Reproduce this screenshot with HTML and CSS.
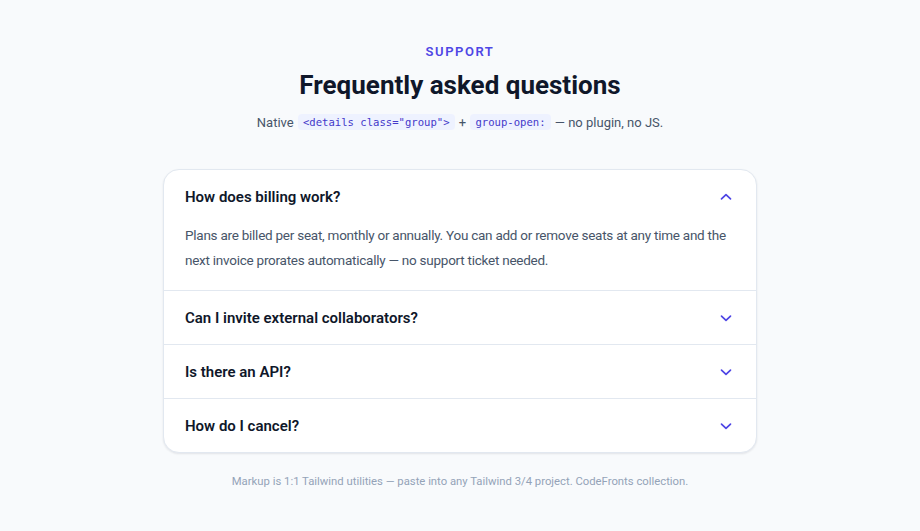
FILE: index.html
```html
<!DOCTYPE html>
<html lang="en">
<head>
<meta charset="utf-8">
<title>FAQ</title>
<link rel="stylesheet" href="styles.css">
</head>
<body>
<main class="page">
  <header class="intro">
    <p class="eyebrow">Support</p>
    <h1 class="title">Frequently asked questions</h1>
    <p class="lead">Native <code class="chip">&lt;details class="group"&gt;</code> + <code class="chip">group-open:</code> — no plugin, no JS.</p>
  </header>

  <section class="card">
    <details class="item" open>
      <summary class="q">
        <span>How does billing work?</span>
        <svg class="chev" viewBox="0 0 16 16" width="16" height="16" aria-hidden="true"><path d="M3.5 6.2L8 10.4l4.5-4.2" fill="none" stroke="currentColor" stroke-width="1.7" stroke-linecap="round" stroke-linejoin="round"/></svg>
      </summary>
      <p class="a">Plans are billed per seat, monthly or annually. You can add or remove seats at any time and the next invoice prorates automatically — no support ticket needed.</p>
    </details>
    <details class="item">
      <summary class="q">
        <span>Can I invite external collaborators?</span>
        <svg class="chev" viewBox="0 0 16 16" width="16" height="16" aria-hidden="true"><path d="M3.5 6.2L8 10.4l4.5-4.2" fill="none" stroke="currentColor" stroke-width="1.7" stroke-linecap="round" stroke-linejoin="round"/></svg>
      </summary>
    </details>
    <details class="item">
      <summary class="q">
        <span>Is there an API?</span>
        <svg class="chev" viewBox="0 0 16 16" width="16" height="16" aria-hidden="true"><path d="M3.5 6.2L8 10.4l4.5-4.2" fill="none" stroke="currentColor" stroke-width="1.7" stroke-linecap="round" stroke-linejoin="round"/></svg>
      </summary>
    </details>
    <details class="item">
      <summary class="q">
        <span>How do I cancel?</span>
        <svg class="chev" viewBox="0 0 16 16" width="16" height="16" aria-hidden="true"><path d="M3.5 6.2L8 10.4l4.5-4.2" fill="none" stroke="currentColor" stroke-width="1.7" stroke-linecap="round" stroke-linejoin="round"/></svg>
      </summary>
    </details>
  </section>

  <p class="foot">Markup is 1:1 Tailwind utilities — paste into any Tailwind 3/4 project. CodeFronts collection.</p>
</main>
</body>
</html>
```

FILE: styles.css
```css
* { box-sizing: border-box; }
html, body { margin: 0; padding: 0; }
body {
  background: #f8fafc;
  font-family: Roboto, Inter, "Liberation Sans", sans-serif;
  color: #0f172a;
  -webkit-font-smoothing: antialiased;
}
.page {
  width: 594px;
  margin: 0 auto;
  padding-top: 42px;
}
.intro { text-align: center; }
.eyebrow {
  margin: 0;
  font-size: 13px;
  line-height: 20px;
  font-weight: 600;
  letter-spacing: 0.12em;
  text-transform: uppercase;
  color: #4f46e5;
}
.title {
  margin: 5px 0 0;
  font-size: 26px;
  line-height: 36px;
  font-weight: 700;
  color: #0f172a;
}
.lead {
  margin: 8px 0 0;
  font-size: 13px;
  line-height: 24px;
  color: #475569;
}
.chip {
  font-family: "DejaVu Sans Mono", "Liberation Mono", monospace;
  font-size: 10.6px;
  line-height: 16px;
  display: inline-block;
  padding: 0 5px;
  margin: 0 1px;
  border-radius: 4px;
  background: #eef2ff;
  color: #4338ca;
  vertical-align: 1px;
}
.card {
  margin-top: 34px;
  background: #fff;
  border: 1px solid #e2e8f0;
  border-radius: 16px;
  box-shadow: 0 1px 2px rgba(15, 23, 42, 0.06), 0 1px 3px rgba(15, 23, 42, 0.04);
  overflow: hidden;
}
.item + .item { border-top: 1px solid #e2e8f0; }
.q {
  list-style: none;
  display: flex;
  align-items: center;
  justify-content: space-between;
  padding: 17px 22px 15px 21px;
  font-size: 15px;
  line-height: 21px;
  font-weight: 600;
  color: #0f172a;
  cursor: pointer;
}
.q::-webkit-details-marker { display: none; }
.chev {
  flex: none;
  color: #4f46e5;
  position: relative;
  top: -1px;
}
.item[open] .chev { transform: rotate(180deg); }
.a {
  margin: 0;
  padding: 0 22px 17px 21px;
  font-size: 13.5px;
  line-height: 25px;
  letter-spacing: -0.25px;
  color: #475569;
}
.foot {
  margin: 21px 0 0;
  text-align: center;
  font-size: 11.3px;
  line-height: 16px;
  color: #94a3b8;
}
```
